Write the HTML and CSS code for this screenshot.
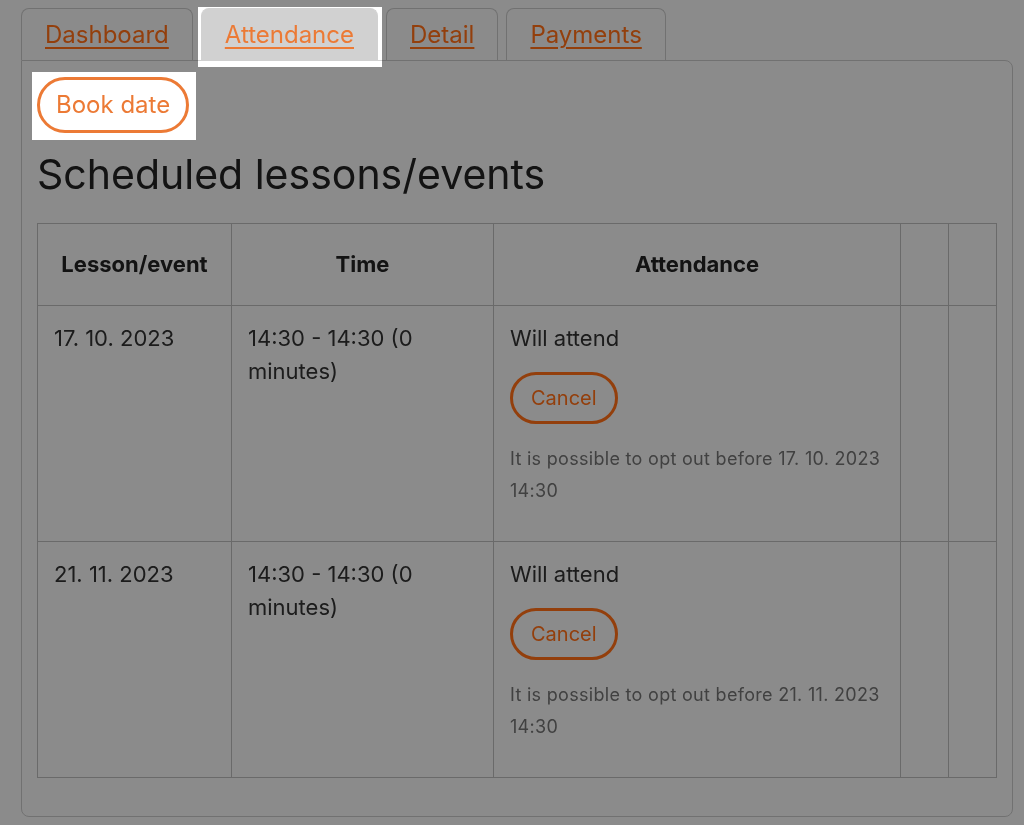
FILE: index.html
```html
<!DOCTYPE html>
<html lang="en">
<head>
<meta charset="utf-8">
<title>Attendance</title>
<link rel="stylesheet" href="styles.css">
</head>
<body>
<div class="page">
  <nav class="tabs">
    <a class="tab" href="#">Dashboard</a>
    <a class="tab active" href="#">Attendance</a>
    <a class="tab" href="#">Detail</a>
    <a class="tab" href="#">Payments</a>
  </nav>
  <section class="panel">
    <button class="btn btn-lg">Book date</button>
    <h1 class="title">Scheduled lessons/events</h1>
    <table class="grid">
      <colgroup>
        <col class="c-date"><col class="c-time"><col class="c-att"><col class="c-x"><col class="c-x">
      </colgroup>
      <thead>
        <tr><th>Lesson/event</th><th>Time</th><th>Attendance</th><th></th><th></th></tr>
      </thead>
      <tbody>
        <tr>
          <td>17. 10. 2023</td>
          <td>14:30 - 14:30 (0 minutes)</td>
          <td>
            <div class="status">Will attend</div>
            <button class="btn btn-sm">Cancel</button>
            <p class="note">It is possible to opt out before 17. 10. 2023 14:30</p>
          </td>
          <td></td><td></td>
        </tr>
        <tr>
          <td>21. 11. 2023</td>
          <td>14:30 - 14:30 (0 minutes)</td>
          <td>
            <div class="status">Will attend</div>
            <button class="btn btn-sm">Cancel</button>
            <p class="note">It is possible to opt out before 21. 11. 2023 14:30</p>
          </td>
          <td></td><td></td>
        </tr>
      </tbody>
    </table>
  </section>
</div>
<div class="spotlight"></div>
</body>
</html>
```
FILE: styles.css
```css
html, body {
  margin: 0;
  background: #fff;
}
body {
  font-family: Inter, "Noto Sans", sans-serif;
  color: #333;
}
.page {
  padding: 8px 11px 0 21px;
}
.tabs {
  display: flex;
  gap: 8px;
}
.tab {
  display: block;
  padding: 12px 23px 11px;
  line-height: 28px;
  font-size: 24px;
  color: #ec7a35;
  text-decoration: underline;
  text-decoration-thickness: 2px;
  text-underline-offset: 4px;
  border: 1px solid #d0d0d0;
  border-bottom: none;
  border-radius: 8px 8px 0 0;
  background: #fff;
}
.tab.active {
  background: #d1d1d1;
  border-color: #d1d1d1;
}
.panel {
  border: 1px solid #d0d0d0;
  border-radius: 0 8px 8px 8px;
  padding: 16px 15px 38px;
}
.btn {
  display: block;
  font-family: inherit;
  background: #fff;
  color: #ec7a35;
  border: 3px solid #ec7a35;
  border-radius: 999px;
}
.btn-lg {
  font-size: 24px;
  line-height: 28px;
  padding: 11px 16px;
}
.btn-sm {
  font-size: 20px;
  line-height: 24px;
  padding: 11px 18px;
  margin: 17px 0 19px;
}
.title {
  font-size: 41px;
  font-weight: 400;
  line-height: 50px;
  color: #222;
  margin: 16px 0 24px;
}
.grid {
  width: 100%;
  border-collapse: collapse;
  table-layout: fixed;
  font-size: 22px;
  line-height: 33px;
}
.c-date { width: 194px; }
.c-time { width: 262px; }
.c-att { width: 407px; }
.c-x { width: 48px; }
.grid th, .grid td {
  border: 1px solid #c2c2c2;
  text-align: left;
  vertical-align: top;
  padding: 16px 16px;
}
.grid th {
  text-align: center;
  font-weight: 700;
  padding: 24px 16px;
  color: #222;
}
.grid td {
  height: 203px;
}
.note {
  margin: 0 0 15px;
  font-size: 18px;
  line-height: 32px;
  letter-spacing: 0.3px;
  color: #777;
}
.spotlight {
  position: fixed;
  inset: 0;
  backdrop-filter: brightness(0.545) saturate(1.35);
  -webkit-backdrop-filter: brightness(0.545) saturate(1.35);
  clip-path: path(evenodd, "M0 0H1024V825H0Z M198 7H382V67H198Z M32 72H196V140H32Z");
}
```
